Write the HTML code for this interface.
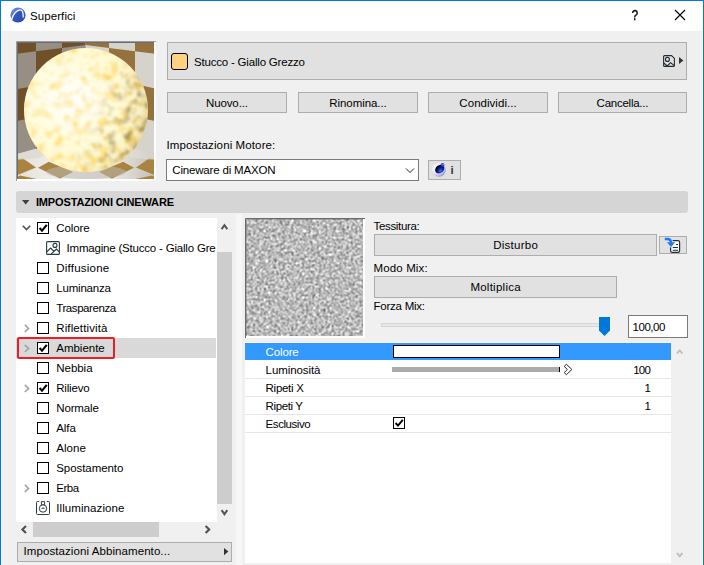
<!DOCTYPE html>
<html lang="it">
<head>
<meta charset="utf-8">
<title>Superfici</title>
<style>
*{box-sizing:border-box;margin:0;padding:0}
html,body{width:704px;height:565px;overflow:hidden;background:#f0f0f0}
body{position:relative;font-family:"Liberation Sans",sans-serif;font-size:11.5px;color:#000;line-height:1}
.a{position:absolute}
svg{position:absolute;overflow:visible}
.t{position:absolute;white-space:nowrap;line-height:14px;height:14px}
.btn{position:absolute;background:#e1e1e1;border:1px solid #adadad}
.cb{position:absolute;width:12px;height:12px;border:1px solid #000;background:#fff}
.sep{position:absolute;left:245px;width:426px;height:1px;background:#e6e6e6}
</style>
</head>
<body>

<div class="a" style="left:0;top:0;width:704px;height:31px;background:#fff"></div>
<div class="a" style="left:0;top:0;width:704px;height:1px;background:#0478d6"></div>
<div class="a" style="left:0;top:0;width:1px;height:565px;background:#0478d6"></div>
<div class="a" style="left:703px;top:0;width:1px;height:565px;background:#0478d6"></div>
<div class="a" style="left:1px;top:31px;width:1px;height:534px;background:#f8f8f8"></div>
<div class="a" style="left:702px;top:31px;width:1px;height:534px;background:#f8f8f8"></div>
<div class="a" style="left:236px;top:214px;width:6px;height:351px;background:#f7f7f7"></div>
<svg style="left:10px;top:7px" width="16" height="16" viewBox="0 0 16 16">
<defs><linearGradient id="lg" x1="0" y1="0" x2="1" y2="1"><stop offset="0" stop-color="#6a94e8"/><stop offset="1" stop-color="#2445a8"/></linearGradient></defs>
<circle cx="8" cy="8" r="7.6" fill="url(#lg)"/>
<path d="M1.6 13 C3 7 7 2.6 10.6 2.8 C12.6 3 13.2 5 13.2 10 L13.2 13 A7.6 7.6 0 0 1 2.6 13.4 Z" fill="#2a4cb0" opacity="0.7"/>
<path d="M1.4 13.4 C3 7 7 2.6 10.6 2.8 C12.8 3 13.3 5.4 13.2 10.4" stroke="#fff" stroke-width="1.3" fill="none"/>
</svg>
<div class="t" style="left:30.00px;top:9px;letter-spacing:0.083px">Superfici</div>
<div class="t" style="left:631.2px;top:8px;font-size:14px;color:#000;transform:scaleX(0.86);-webkit-text-stroke:0.35px #000">?</div>
<svg style="left:674px;top:9px" width="12" height="12" viewBox="0 0 12 12"><path d="M1 1 L11 11 M11 1 L1 11" stroke="#000" stroke-width="1.1" fill="none"/></svg>
<svg style="left:16px;top:41px" width="140" height="140" viewBox="16 41 140 140">
<defs>
<clipPath id="pc"><rect x="17" y="42" width="138" height="138"/></clipPath>
<radialGradient id="fl" gradientUnits="userSpaceOnUse" cx="70" cy="168" r="80"><stop offset="0" stop-color="#f4f3ee"/><stop offset="0.6" stop-color="#e6e3dd"/><stop offset="1" stop-color="#c8c4bd"/></radialGradient>
<clipPath id="sc"><circle cx="86" cy="110" r="62"/></clipPath>
<radialGradient id="sg" cx="0.4" cy="0.42" r="0.62"><stop offset="0" stop-color="#ffffff"/><stop offset="0.5" stop-color="#fffcdc"/><stop offset="0.9" stop-color="#fff8cc"/><stop offset="1" stop-color="#fdf0b4"/></radialGradient>
<radialGradient id="sh" cx="0.22" cy="0.42" r="0.85"><stop offset="0" stop-color="#fff" stop-opacity="0.25"/><stop offset="0.6" stop-color="#fff" stop-opacity="0"/><stop offset="0.85" stop-color="#7a5f28" stop-opacity="0.05"/><stop offset="1" stop-color="#6a5020" stop-opacity="0.22"/></radialGradient>
<linearGradient id="dm" x1="0" y1="0.2" x2="1" y2="0.6"><stop offset="0.55" stop-color="#fff" stop-opacity="0"/><stop offset="0.9" stop-color="#fff" stop-opacity="1"/></linearGradient>
<mask id="dmk"><rect x="24" y="48" width="124" height="124" fill="url(#dm)"/></mask>
<filter id="bl" x="0" y="0" width="1" height="1" color-interpolation-filters="sRGB"><feTurbulence type="fractalNoise" baseFrequency="0.11" numOctaves="2" seed="11"/><feColorMatrix type="matrix" values="0 0 0 0 1  0 0 0 0 0.82  0 0 0 0 0.28  2.6 1.8 0 0 -2.1"/><feGaussianBlur stdDeviation="0.9"/></filter>
<filter id="bd" x="0" y="0" width="1" height="1" color-interpolation-filters="sRGB"><feTurbulence type="fractalNoise" baseFrequency="0.12" numOctaves="2" seed="23"/><feColorMatrix type="matrix" values="0 0 0 0 0.56  0 0 0 0 0.45  0 0 0 0 0.2  2.8 2 0 0 -2.3"/><feGaussianBlur stdDeviation="0.8"/></filter>
</defs>
<g clip-path="url(#pc)">
<!-- left wall -->
<rect x="17" y="42" width="69" height="137" fill="#978f83"/>
<path d="M17 42 H36 V51.3 L17 53.7 Z M62 42 H85.6 V45 L62 48 Z M36 51.3 L62 48 V81.8 L36 86 Z M17 89 L36 86 V117 L17 121 Z M36 117 L62 112 V143 L36 149 Z" fill="#6f5028"/>
<!-- right wall -->
<rect x="85.6" y="42" width="70" height="137" fill="#d6d2cc"/>
<path d="M135 42 H155 V53.8 L135 51.3 Z M85.6 42 H109 V48 L85.6 45 Z M109 48 L135 51.3 V84 L109 78.3 Z M135 84 L155 88.4 V121 L135 117 Z M109 112 L135 117 V149 L109 143 Z" fill="#95713d"/>
<!-- floor -->
<path d="M17 154 L35 149 L86 140 L137 149 L155 154 V180 H17 Z" fill="url(#fl)"/>
<path d="M17 159 L23 158.6 L36 167.4 L19 174.5 L17 174 Z M38 167.8 L48.8 161.7 L73 172 L60 178.5 Z M134 167.8 L123.2 161.7 L99 172 L112 178.5 Z M155 159 L149 158.6 L136 167.4 L153 174.5 L155 174 Z M36.500 179 L20 175.500 L17 177 V179 Z M135.500 179 L152 175.500 L155 177 V179 Z" fill="#a98440"/>
<path d="M17 154 L35 149 L60 144 L40 158 L17 160 Z" fill="#d9d6cf" opacity="0.6"/>
<path d="M155 154 L137 149 L112 144 L132 158 L155 160 Z" fill="#e4e1da" opacity="0.5"/>
<ellipse cx="86" cy="172" rx="40" ry="7" fill="#bcb8b0" opacity="0.55"/>
<!-- sphere -->
<circle cx="86" cy="110" r="62" fill="url(#sg)"/>
<g clip-path="url(#sc)"><rect x="24" y="48" width="124" height="124" filter="url(#bl)" opacity="0.64"/>
<g mask="url(#dmk)"><rect x="24" y="48" width="124" height="124" filter="url(#bd)" opacity="0.7"/></g></g>
<circle cx="86" cy="110" r="62" fill="url(#sh)"/>
</g>
<path d="M16.500 181 V41.500 H156" stroke="#9a9da0" fill="none"/>
<path d="M17.500 180 V42.500 H155" stroke="#696d72" fill="none"/>
<path d="M155 42 V180 H17" stroke="#fff" stroke-width="2" fill="none"/>
</svg>
<div class="btn" style="left:167px;top:42px;width:520px;height:38px"></div>
<div class="a" style="left:171px;top:53px;width:17px;height:17px;border:1px solid #000;border-radius:3px;background:#ffd27f"></div>
<div class="t" style="left:194.00px;top:55px;letter-spacing:-0.195px">Stucco - Giallo Grezzo</div>
<svg style="left:663px;top:55px" width="12" height="12" viewBox="0 0 12 12" fill="none" stroke="#1f2d36" stroke-width="1.1" stroke-linejoin="round">
<path d="M1.6 0.6 H8.6 L11.4 3.4 V10.4 Q11.4 11.4 10.4 11.4 H1.6 Q0.6 11.4 0.6 10.4 V1.6 Q0.6 0.6 1.6 0.6 Z"/>
<circle cx="4.4" cy="4.4" r="2"/>
<path d="M0.8 8 L4.2 11 L7.6 7.6 L11.2 10.6"/>
</svg>
<svg style="left:679px;top:57px" width="5" height="7" viewBox="0 0 5 7"><path d="M0 0 L4.4 3.5 L0 7 Z" fill="#333"/></svg>
<div class="btn" style="left:167px;top:92px;width:120px;height:21px"></div>
<div class="btn" style="left:298px;top:92px;width:120px;height:21px"></div>
<div class="btn" style="left:428px;top:92px;width:120px;height:21px"></div>
<div class="btn" style="left:558px;top:92px;width:129px;height:21px"></div>
<div class="t" style="left:205.95px;top:96px;letter-spacing:-0.104px">Nuovo...</div>
<div class="t" style="left:329.22px;top:96px;letter-spacing:-0.061px">Rinomina...</div>
<div class="t" style="left:459.37px;top:96px;letter-spacing:0.034px">Condividi...</div>
<div class="t" style="left:596.58px;top:96px;letter-spacing:-0.249px">Cancella...</div>
<div class="t" style="left:166.40px;top:138px;letter-spacing:0.113px">Impostazioni Motore:</div>
<div class="a" style="left:166px;top:159px;width:253px;height:22px;background:#fff;border:1px solid #7a7a7a"></div>
<div class="t" style="left:172.30px;top:163px;letter-spacing:-0.182px">Cineware di MAXON</div>
<svg style="left:405px;top:167px" width="10" height="7" viewBox="0 0 10 7"><path d="M1 1.5 L5 5.5 L9 1.5" stroke="#222" stroke-width="1" fill="none"/></svg>
<div class="btn" style="left:428px;top:160px;width:33px;height:20px"></div>
<svg style="left:431px;top:162px" width="16" height="16" viewBox="0 0 16 16">
<defs><radialGradient id="cg" cx="0.32" cy="0.3" r="0.85"><stop offset="0" stop-color="#fff"/><stop offset="0.55" stop-color="#e4e6f4"/><stop offset="0.85" stop-color="#9aa0dc"/><stop offset="1" stop-color="#4a52b8"/></radialGradient>
<radialGradient id="cb" cx="0.45" cy="0.72" r="0.6"><stop offset="0" stop-color="#3f7af8"/><stop offset="0.35" stop-color="#1a34c0"/><stop offset="0.8" stop-color="#060a3c"/><stop offset="1" stop-color="#02041c"/></radialGradient></defs>
<circle cx="7.9" cy="7.8" r="6.9" fill="url(#cg)"/>
<ellipse cx="8.7" cy="7.1" rx="5" ry="3.9" transform="rotate(-40 8.7 7.1)" fill="url(#cb)"/>
<circle cx="11.6" cy="2.9" r="1.9" fill="#3346d0"/>
<circle cx="12.1" cy="2.5" r="0.8" fill="#8a8cf0"/>
</svg>
<div class="t" style="left:450.4px;top:162.6px;font-size:11.5px;font-weight:bold;color:#3a3a3a">i</div>
<div class="a" style="left:16px;top:191px;width:672px;height:22px;background:#d5d5d5;border-radius:3px"></div>
<svg style="left:22px;top:200px" width="8" height="5" viewBox="0 0 8 5"><path d="M0 0 L7.4 0 L3.7 4.4 Z" fill="#404040"/></svg>
<div class="t" style="left:35.90px;top:195px;letter-spacing:-0.141px;font-size:11px;font-weight:bold">IMPOSTAZIONI CINEWARE</div>
<div class="a" style="left:16px;top:218px;width:201px;height:304px;background:#fff"></div>
<div class="a" style="left:16px;top:338px;width:200px;height:20px;background:#d9d9d9"></div>
<div class="cb" style="left:37px;top:222px"></div>
<svg style="left:37px;top:222px" width="12" height="12" viewBox="0 0 12 12"><path d="M2.6 6 L5 8.6 L9.8 2.8" stroke="#000" stroke-width="2.1" fill="none"/></svg>
<svg style="left:22px;top:225px" width="10" height="7" viewBox="0 0 10 7"><path d="M0.8 0.8 L4.5 4.6 L8.2 0.8" stroke="#505050" stroke-width="1.6" fill="none"/></svg>
<div class="t" style="left:56.25px;top:221px;letter-spacing:-0.107px">Colore</div>
<svg style="left:46px;top:241px" width="14" height="14" viewBox="0 0 14 14" fill="none" stroke="#2b3a42" stroke-width="1.1" stroke-linejoin="round">
<rect x="0.6" y="0.6" width="12.8" height="12.8" rx="1"/><circle cx="9" cy="4.4" r="2"/><path d="M0.8 10.8 L4.6 7 L8 10.4 L10.4 8 L13.2 10.8 M8 10.4 L5 13.2"/></svg>
<div class="t" style="left:66.50px;top:241px;letter-spacing:-0.196px">Immagine (Stucco - Giallo Gre</div>
<div class="cb" style="left:37px;top:262px"></div>
<div class="t" style="left:56.25px;top:261px;letter-spacing:0.231px">Diffusione</div>
<div class="cb" style="left:37px;top:282px"></div>
<div class="t" style="left:56.25px;top:281px;letter-spacing:-0.196px">Luminanza</div>
<div class="cb" style="left:37px;top:302px"></div>
<div class="t" style="left:56.25px;top:301px;letter-spacing:-0.422px">Trasparenza</div>
<div class="cb" style="left:37px;top:322px"></div>
<svg style="left:24px;top:324px" width="6" height="9" viewBox="0 0 6 9"><path d="M0.8 0.8 L4.6 4.4 L0.8 8" stroke="#a3a3a3" stroke-width="1.6" fill="none"/></svg>
<div class="t" style="left:56.25px;top:321px;letter-spacing:0.116px">Riflettività</div>
<div class="cb" style="left:37px;top:342px"></div>
<svg style="left:37px;top:342px" width="12" height="12" viewBox="0 0 12 12"><path d="M2.6 6 L5 8.6 L9.8 2.8" stroke="#000" stroke-width="2.1" fill="none"/></svg>
<svg style="left:24px;top:344px" width="6" height="9" viewBox="0 0 6 9"><path d="M0.8 0.8 L4.6 4.4 L0.8 8" stroke="#a3a3a3" stroke-width="1.6" fill="none"/></svg>
<div class="t" style="left:56.25px;top:341px;letter-spacing:-0.012px">Ambiente</div>
<div class="cb" style="left:37px;top:362px"></div>
<div class="t" style="left:56.25px;top:361px;letter-spacing:-0.034px">Nebbia</div>
<div class="cb" style="left:37px;top:382px"></div>
<svg style="left:37px;top:382px" width="12" height="12" viewBox="0 0 12 12"><path d="M2.6 6 L5 8.6 L9.8 2.8" stroke="#000" stroke-width="2.1" fill="none"/></svg>
<svg style="left:24px;top:384px" width="6" height="9" viewBox="0 0 6 9"><path d="M0.8 0.8 L4.6 4.4 L0.8 8" stroke="#a3a3a3" stroke-width="1.6" fill="none"/></svg>
<div class="t" style="left:56.25px;top:381px;letter-spacing:-0.181px">Rilievo</div>
<div class="cb" style="left:37px;top:402px"></div>
<div class="t" style="left:56.25px;top:401px;letter-spacing:-0.138px">Normale</div>
<div class="cb" style="left:37px;top:422px"></div>
<div class="t" style="left:56.25px;top:421px;letter-spacing:-0.082px">Alfa</div>
<div class="cb" style="left:37px;top:442px"></div>
<div class="t" style="left:56.25px;top:441px;letter-spacing:0.066px">Alone</div>
<div class="cb" style="left:37px;top:462px"></div>
<div class="t" style="left:56.25px;top:461px;letter-spacing:-0.070px">Spostamento</div>
<div class="cb" style="left:37px;top:482px"></div>
<svg style="left:24px;top:484px" width="6" height="9" viewBox="0 0 6 9"><path d="M0.8 0.8 L4.6 4.4 L0.8 8" stroke="#a3a3a3" stroke-width="1.6" fill="none"/></svg>
<div class="t" style="left:56.25px;top:481px;letter-spacing:-0.449px">Erba</div>
<svg style="left:36px;top:501px" width="14" height="14" viewBox="0 0 14 14" fill="none" stroke="#2b3a42" stroke-width="1">
<path d="M3.2 0.5 H1.6 Q0.5 0.5 0.5 1.6 V12.4 Q0.5 13.5 1.6 13.5 H12.4 Q13.5 13.5 13.5 12.4 V1.6 Q13.5 0.5 12.4 0.5 H10.8"/>
<path d="M5.4 0.6 H8.6 V3.9 H5.4 Z" fill="#fff"/><circle cx="7" cy="7.5" r="3.7" fill="#fff"/><path d="M5.5 7.6 L6.3 6.7 L7 8 L7.7 6.7 L8.5 7.6" stroke-width="0.8"/></svg>
<div class="t" style="left:56.25px;top:501px;letter-spacing:0.087px">Illuminazione</div>
<div class="a" style="left:216px;top:238px;width:1px;height:20px;background:#fff"></div>
<div class="a" style="left:17px;top:336.5px;width:97.5px;height:22.5px;border:2px solid #ee1c25;border-radius:2px"></div>
<div class="a" style="left:217px;top:218px;width:15px;height:304px;background:#f0f0f0"></div>
<div class="a" style="left:217px;top:252px;width:15px;height:252px;background:#cdcdcd"></div>
<svg style="left:221px;top:223px" width="8" height="8" viewBox="0 0 8 8"><path d="M0.6 6.2 L3.45 2.2 L6.3 6.2" stroke="#555" stroke-width="2" fill="none"/></svg>
<svg style="left:221px;top:509px" width="8" height="8" viewBox="0 0 8 8"><path d="M0.6 1.2 L3.45 5.2 L6.3 1.2" stroke="#555" stroke-width="2" fill="none"/></svg>
<div class="a" style="left:33px;top:522px;width:126px;height:15px;background:#cdcdcd"></div>
<svg style="left:20px;top:525px" width="8" height="9" viewBox="0 0 8 9"><path d="M6 1 L2.4 4.5 L6 8" stroke="#505050" stroke-width="2.1" fill="none"/></svg>
<svg style="left:204px;top:525px" width="8" height="9" viewBox="0 0 8 9"><path d="M1.6 1 L5.2 4.5 L1.6 8" stroke="#505050" stroke-width="2.1" fill="none"/></svg>
<div class="btn" style="left:17px;top:542px;width:215px;height:20px"></div>
<div class="t" style="left:23.60px;top:544px;letter-spacing:0.078px">Impostazioni Abbinamento...</div>
<svg style="left:224px;top:548px" width="5" height="8" viewBox="0 0 5 8"><path d="M0 0 L4.4 3.6 L0 7.2 Z" fill="#333"/></svg>
<svg style="left:245px;top:218px" width="120" height="120" viewBox="0 0 120 120">
<defs><filter id="nz" x="0" y="0" width="1" height="1" color-interpolation-filters="sRGB"><feTurbulence type="fractalNoise" baseFrequency="0.62" numOctaves="1" seed="3" result="a"/><feTurbulence type="fractalNoise" baseFrequency="0.47" numOctaves="1" seed="8" result="b"/><feComposite in="a" in2="b" operator="arithmetic" k1="0" k2="0.5" k3="0.5" k4="0"/><feConvolveMatrix order="3" kernelMatrix="1 2 1 2 4 2 1 2 1" edgeMode="duplicate" preserveAlpha="true"/><feColorMatrix type="matrix" values="2.4 0 0 0 -0.47  2.4 0 0 0 -0.47  2.4 0 0 0 -0.47  0 0 0 0 1"/></filter></defs>
<rect x="1" y="1" width="118" height="118" fill="#b6b6b6"/>
<rect x="1" y="1" width="118" height="118" filter="url(#nz)"/>
<path d="M0.500 120 V0.500 H120" stroke="#6a6a6a" fill="none"/>
<path d="M1.500 119 V1.500 H119" stroke="#6a6a6a" stroke-opacity="0.4" fill="none"/>
<path d="M119 1 V119 H1" stroke="#fff" stroke-width="2" fill="none"/>
</svg>
<div class="t" style="left:373.50px;top:219px;letter-spacing:-0.322px">Tessitura:</div>
<div class="btn" style="left:374px;top:234px;width:283px;height:22px"></div>
<div class="t" style="left:493.14px;top:238px;letter-spacing:0.271px">Disturbo</div>
<div class="btn" style="left:659px;top:236px;width:28px;height:18px"></div>
<svg style="left:659px;top:236px" width="28" height="18" viewBox="659 236 28 18" fill="none">
<rect x="670.6" y="240.6" width="9" height="11.8" rx="1.6" fill="#fff" stroke="#1f2d36" stroke-width="1.2"/>
<path d="M676 244.5 H678 M672.8 247.5 H678 M672.8 250.3 H678" stroke="#1f2d36" stroke-width="1"/>
<path d="M664.6 239 H667.4 Q671 239 671 242.8 V244.6" stroke="#e1e1e1" stroke-width="4"/><path d="M666 242 L671 248 L676 242 Z" fill="#e1e1e1"/><path d="M664.8 239 H667.4 Q671 239 671 242.8 V244.6" stroke="#1e78ff" stroke-width="2.4"/>
<path d="M667 242.3 L671 247.1 L675 242.3 Z" fill="#1e78ff"/>
</svg>
<div class="t" style="left:373.50px;top:261px;letter-spacing:0.134px">Modo Mix:</div>
<div class="btn" style="left:374px;top:276px;width:243px;height:22px"></div>
<div class="t" style="left:470.38px;top:280px;letter-spacing:0.256px">Moltiplica</div>
<div class="t" style="left:373.50px;top:299px;letter-spacing:-0.242px">Forza Mix:</div>
<div class="a" style="left:381px;top:323px;width:224px;height:4px;background:#e7e7e7;border:1px solid #d6d6d6"></div>
<svg style="left:599px;top:317px" width="11" height="19" viewBox="0 0 11 19"><path d="M0 0 H11 V13.5 L5.5 19 L0 13.5 Z" fill="#0078d7"/></svg>
<div class="a" style="left:628px;top:315px;width:60px;height:23px;background:#fff;border:1px solid #7a7a7a"></div>
<div class="t" style="left:632.60px;top:320px;letter-spacing:-0.498px">100,00</div>
<div class="a" style="left:245px;top:342px;width:427px;height:221px;background:#fff"></div>
<div class="a" style="left:245px;top:343px;width:426px;height:17px;background:#3399ff"></div>
<div class="a" style="left:671px;top:343px;width:17px;height:220px;background:#f0f0f0"></div>
<div class="sep" style="top:378px"></div>
<div class="sep" style="top:396px"></div>
<div class="sep" style="top:414px"></div>
<div class="sep" style="top:432px"></div>
<div class="a" style="left:393px;top:345px;width:167px;height:13px;background:#fff;border:1px solid #000"></div>
<div class="a" style="left:392px;top:367px;width:168px;height:5px;background:#ababab"></div>
<div class="a" style="left:559px;top:367px;width:1px;height:5px;background:#000"></div>
<svg style="left:562px;top:362px" width="12" height="15" viewBox="562 362 12 15"><path d="M566.4 364.3 L571.9 369.5 L566.4 374.7 L564.2 372.5 L567.4 369.5 L564.2 366.4 Z" stroke="#2a2a2a" stroke-width="1" fill="#fff" stroke-linejoin="miter"/></svg>
<div class="t" style="left:265.60px;top:345px;letter-spacing:-0.148px;color:#fff">Colore</div>
<div class="t" style="left:265.60px;top:363px;letter-spacing:-0.083px">Luminosità</div>
<div class="t" style="left:265.60px;top:381px;letter-spacing:-0.285px">Ripeti X</div>
<div class="t" style="left:265.60px;top:399px;letter-spacing:-0.383px">Ripeti Y</div>
<div class="t" style="left:265.60px;top:417px;letter-spacing:-0.442px">Esclusivo</div>
<div class="t" style="left:633.14px;top:363px;letter-spacing:-0.663px">100</div>
<div class="t" style="left:644.59px;top:381px;letter-spacing:-1.406px">1</div>
<div class="t" style="left:644.59px;top:399px;letter-spacing:-1.406px">1</div>
<div class="cb" style="left:393px;top:417px"></div>
<svg style="left:393px;top:417px" width="12" height="12" viewBox="0 0 12 12"><path d="M2.6 6 L5 8.6 L9.8 2.8" stroke="#000" stroke-width="1.9" fill="none"/></svg>
<svg style="left:676px;top:348px" width="8" height="8" viewBox="0 0 8 8"><path d="M0.9 5.6 L3.7 2.4 L6.5 5.6" stroke="#c0c0c0" stroke-width="1.9" fill="none"/></svg>
<svg style="left:676px;top:551px" width="8" height="8" viewBox="0 0 8 8"><path d="M0.9 2 L3.7 5.2 L6.5 2" stroke="#c0c0c0" stroke-width="1.9" fill="none"/></svg>
</body>
</html>
